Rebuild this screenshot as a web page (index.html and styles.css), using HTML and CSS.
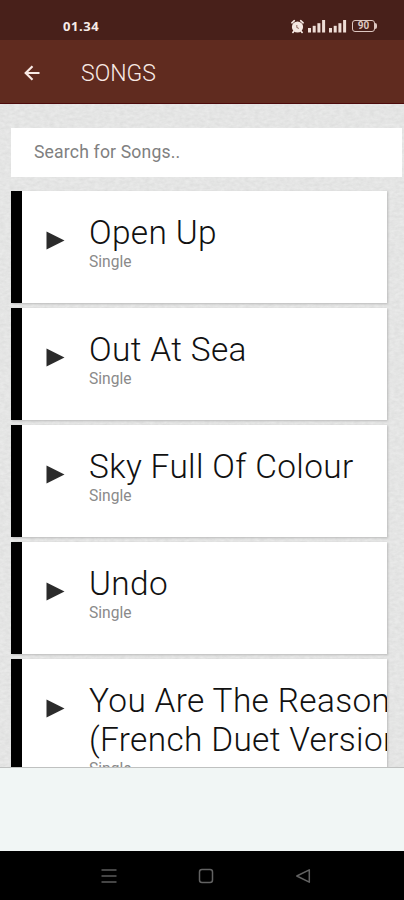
FILE: index.html
```
<!DOCTYPE html>
<html lang="en">
<head>
<meta charset="utf-8">
<title>Songs</title>
<link rel="stylesheet" href="styles.css">
</head>
<body>
<div class="screen">
  <div class="status-bar">
    <span class="clock">01.34</span>
    <div class="status-icons">
      <svg class="alarm" width="13" height="15" viewBox="0 0 13 15">
        <circle cx="6.5" cy="8" r="5.6" fill="#f5e8e2"/>
        <path d="M.9 3.8 3.3 1.7M12.1 3.8 9.7 1.7M2.8 12.2 1.9 13.4M10.2 12.2l.9 1.2" stroke="#f5e8e2" stroke-width="1.7" stroke-linecap="round"/>
        <path d="M5.8 6v2.3l2 1.3" fill="none" stroke="#96736b" stroke-width="1.1"/>
      </svg>
      <svg class="signal" width="18" height="13" viewBox="0 0 18 13" fill="#eeddd6">
        <rect x="0" y="8" width="3" height="4.5"/><rect x="4.7" y="5.8" width="3" height="6.7"/><rect x="9.4" y="3.2" width="3" height="9.3"/><rect x="14.1" y="0" width="3" height="12.5"/>
      </svg>
      <svg class="signal" width="18" height="13" viewBox="0 0 18 13" fill="#eeddd6">
        <rect x="0" y="8" width="3" height="4.5"/><rect x="4.7" y="5.8" width="3" height="6.7"/><rect x="9.4" y="3.2" width="3" height="9.3"/><rect x="14.1" y="0" width="3" height="12.5"/>
      </svg>
      <div class="battery"><span>90</span></div>
    </div>
  </div>
  <header class="app-bar">
    <svg class="back" width="16" height="16" viewBox="0 0 16 16" fill="none" stroke="#f8eae5" stroke-width="2.2">
      <path d="M15.5 8H2M8.5 1.2 1.7 8l6.8 6.8"/>
    </svg>
    <h1>SONGS</h1>
  </header>
  <main class="content">
    <svg class="paper" width="404" height="664">
      <filter id="grain" x="0" y="0" width="100%" height="100%" color-interpolation-filters="sRGB">
        <feTurbulence type="fractalNoise" baseFrequency="0.2 0.35" numOctaves="3" seed="4"/>
        <feColorMatrix values="0.07 0 0 0 0.86  0.07 0 0 0 0.862  0.07 0 0 0 0.86  0 0 0 0 1"/>
      </filter>
      <rect width="404" height="664" filter="url(#grain)"/>
    </svg>
    <div class="search">Search for Songs..</div>
    <div class="songs">
      <article class="song">
        <svg class="play" width="19" height="19" viewBox="0 0 19 19"><path d="M.5.5 18.5 9.5.5 18.5z"/></svg>
        <div class="info"><h2>Open Up</h2><p>Single</p></div>
      </article>
      <article class="song">
        <svg class="play" width="19" height="19" viewBox="0 0 19 19"><path d="M.5.5 18.5 9.5.5 18.5z"/></svg>
        <div class="info"><h2>Out At Sea</h2><p>Single</p></div>
      </article>
      <article class="song">
        <svg class="play" width="19" height="19" viewBox="0 0 19 19"><path d="M.5.5 18.5 9.5.5 18.5z"/></svg>
        <div class="info"><h2>Sky Full Of Colour</h2><p>Single</p></div>
      </article>
      <article class="song">
        <svg class="play" width="19" height="19" viewBox="0 0 19 19"><path d="M.5.5 18.5 9.5.5 18.5z"/></svg>
        <div class="info"><h2>Undo</h2><p>Single</p></div>
      </article>
      <article class="song">
        <svg class="play" width="19" height="19" viewBox="0 0 19 19"><path d="M.5.5 18.5 9.5.5 18.5z"/></svg>
        <div class="info"><h2>You Are The Reason<br>(French Duet Version)</h2><p>Single</p></div>
      </article>
    </div>
  </main>
  <div class="banner"></div>
  <nav class="nav-bar">
    <svg width="16" height="16" viewBox="0 0 16 16" stroke="#5c5c5c" stroke-width="1.6"><path d="M.5 2h15M.5 8h15M.5 14h15"/></svg>
    <svg width="16" height="16" viewBox="0 0 16 16" fill="none" stroke="#626262" stroke-width="1.5"><rect x="1.5" y="1.5" width="13" height="13" rx="2.5"/></svg>
    <svg width="16" height="16" viewBox="0 0 16 16" fill="none" stroke="#626262" stroke-width="1.5" stroke-linejoin="round"><path d="M14.3 1.8v12.4L1.8 8z"/></svg>
  </nav>
</div>
</body>
</html>
```

FILE: styles.css
```
* {
  box-sizing: border-box;
  margin: 0;
}

body {
  font-family: Roboto, sans-serif;
  background: #000;
}

.screen {
  display: flex;
  flex-direction: column;
  width: 404px;
  height: 900px;
  overflow: hidden;
}

.status-bar {
  display: flex;
  flex: none;
  justify-content: space-between;
  align-items: center;
  height: 40px;
  padding: 12px 29px 0 63px;
  background: #48201a;
  color: #f8ece8;
}

.clock {
  font: 700 13px/16px "Open Sans", sans-serif;
  letter-spacing: 0.55px;
}

.status-icons {
  display: flex;
  align-items: center;
}

.alarm {
  margin-right: 4px;
}

.signal {
  margin-right: 3px;
}

.battery {
  position: relative;
  width: 23px;
  height: 12px;
  margin-left: 2px;
  border: 1.5px solid #ddc7c1;
  border-radius: 3px;
  font-size: 10px;
  font-weight: 700;
  line-height: 10px;
  text-align: center;
  color: #ddc7c1;
}

.battery::after {
  content: "";
  position: absolute;
  right: -3px;
  top: 2px;
  width: 2px;
  height: 6px;
  border-radius: 0 2px 2px 0;
  background: #ddc7c1;
}

.app-bar {
  display: flex;
  flex: none;
  align-items: center;
  height: 64px;
  padding: 3px 0 0 24px;
  background: #602b1f;
  border-bottom: 1px solid #4d0b0c;
}

.app-bar h1 {
  margin: 2px 0 0 41px;
  font-size: 23px;
  font-weight: 300;
  line-height: 28px;
  color: #f8eae5;
}

.content {
  position: relative;
  flex: none;
  height: 664px;
  padding: 24px 0 0 11px;
  overflow: hidden;
  background: #e3e4e3;
  border-bottom: 1px solid #bfc1c0;
}

.paper {
  position: absolute;
  inset: 0;
}

.search {
  position: relative;
  width: 391px;
  height: 49px;
  padding-left: 23px;
  background: #fff;
  font-size: 17.6px;
  letter-spacing: 0.17px;
  line-height: 49px;
  color: #808080;
}

.songs {
  position: relative;
  display: flex;
  flex-direction: column;
  gap: 5px;
  width: 376px;
  margin-top: 14px;
}

.song {
  display: flex;
  flex: none;
  min-height: 112px;
  padding: 22px 0 20px 24px;
  overflow: hidden;
  background: #fff;
  border-left: 11px solid #000;
  box-shadow: 1px 1px 2px #bbb;
}

.play {
  flex: none;
  margin: 18px 24px 0 0;
  fill: #2b2b2b;
}

.info {
  white-space: nowrap;
}

.info h2 {
  font-size: 33.4px;
  font-weight: 350;
  letter-spacing: 0.36px;
  line-height: 39px;
  color: #111;
}

.info p {
  padding-top: 1px;
  font-size: 15.6px;
  line-height: 19px;
  color: #8a8a8a;
}

.banner {
  flex: none;
  height: 83px;
  background: #f1f6f5;
}

.nav-bar {
  display: flex;
  flex: none;
  justify-content: space-between;
  align-items: center;
  height: 49px;
  padding: 0 93px 0 101px;
  background: #000;
}
```
